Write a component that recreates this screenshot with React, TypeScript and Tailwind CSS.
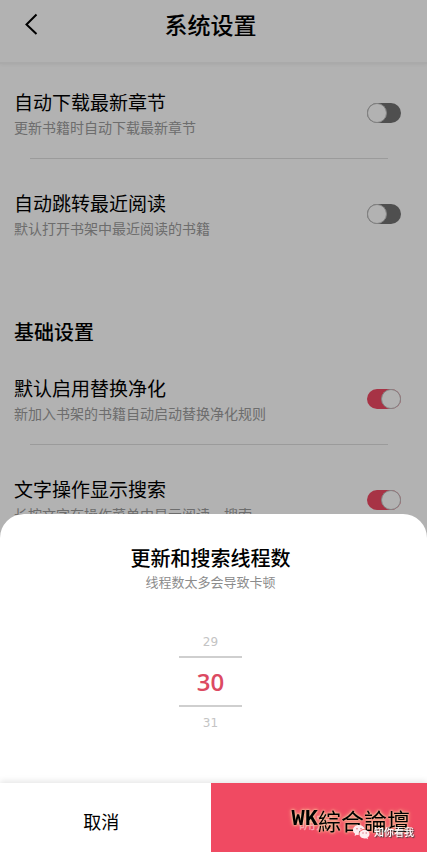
import { useState } from "react";
import type { ReactNode } from "react";

type SettingProps = {
  id: string;
  title: string;
  description: string;
  defaultChecked?: boolean;
};

const Setting = ({ id, title, description, defaultChecked = false }: SettingProps) => {
  return (
    <div className="flex items-start justify-between pl-[14px] pr-5">
      <label htmlFor={id} className="min-w-0">
        <span className="block text-[19px] leading-[26px] text-black">{title}</span>
        <span className="block pb-[2px] text-sm leading-6 text-[#9c9c9c]">{description}</span>
      </label>
      <input
        id={id}
        type="checkbox"
        role="switch"
        defaultChecked={defaultChecked}
        className="mt-[14px] flex h-5 w-[34px] shrink-0 appearance-none rounded-full bg-[#727272] before:size-5 before:rounded-full before:border before:border-[#bdbdbd] before:bg-white before:content-[''] checked:justify-end checked:bg-[#f04a64]"
      />
    </div>
  );
};

const Divider = () => <hr className="mt-[17px] mb-[31px] ml-[30px] mr-[33px] border-t border-[#dedede]" />;

const SettingsPage = () => {
  return (
    <div className="min-h-screen bg-white pr-[6px]">
      <header className="-mr-[6px] flex h-16 items-start border-b-2 border-[#f4f4f4] pr-[6px] shadow-[0_1px_3px_rgba(0,0,0,0.05)]">
        <button type="button" aria-label="返回" className="w-16 pl-5 pt-[13px]">
          <svg viewBox="0 0 24 24" className="size-6" fill="none" stroke="black" strokeWidth="2">
            <path d="M16.5 1.5 6.5 11.5l10 9.500" />
          </svg>
        </button>
        <h1 className="flex-1 pt-2 text-center text-[23px] leading-8 font-medium text-black">系统设置</h1>
        <span className="w-16" />
      </header>
      <main className="pt-[25px]">
        <Setting id="auto-download" title="自动下载最新章节" description="更新书籍时自动下载最新章节" />
        <Divider />
        <Setting id="auto-open" title="自动跳转最近阅读" description="默认打开书架中最近阅读的书籍" />
        <h2 className="mt-[76px] mb-[29px] pl-[14px] text-xl leading-7 font-medium text-black">基础设置</h2>
        <Setting id="replace" title="默认启用替换净化" description="新加入书架的书籍自动启动替换净化规则" defaultChecked />
        <Divider />
        <Setting id="search" title="文字操作显示搜索" description="长按文字在操作菜单中显示阅读、搜索" defaultChecked />
      </main>
    </div>
  );
};

const PickerLine = ({ children }: { children: ReactNode }) => (
  <div className="flex h-[51px] w-[63px] items-center justify-center border-y-2 border-[#cfcfcf]">{children}</div>
);

const ThreadSheet = () => {
  const [count, setCount] = useState(30);

  return (
    <section
      role="dialog"
      aria-labelledby="thread-title"
      className="fixed inset-x-0 bottom-0 rounded-t-[24px] bg-white pt-[30px]"
    >
      <div className="flex flex-col items-center pr-[6px]">
        <h2 id="thread-title" className="text-xl leading-7 font-medium text-black">
          更新和搜索线程数
        </h2>
        <p className="text-[13px] leading-5 text-[#8c8c8c]">线程数太多会导致卡顿</p>
        <div className="flex flex-col items-center pt-10 pb-[52px]">
          <button
            type="button"
            onClick={() => setCount(count - 1)}
            className="h-6 pb-1 font-['DejaVu_Sans',sans-serif] text-xs leading-4 text-[#c4c4c4]"
          >
            {count - 1}
          </button>
          <PickerLine>
            <output className="font-['Open_Sans',sans-serif] text-2xl font-semibold text-[#dc4a62]">{count}</output>
          </PickerLine>
          <button
            type="button"
            onClick={() => setCount(count + 1)}
            className="h-6 pt-2 font-['DejaVu_Sans',sans-serif] text-xs leading-4 text-[#c4c4c4]"
          >
            {count + 1}
          </button>
        </div>
      </div>
      <div className="flex h-[69px] shadow-[0_-2px_6px_rgba(0,0,0,0.1)]">
        <button type="button" className="flex-1 bg-white pt-[6px] text-lg text-black">
          <span className="pr-2">取消</span>
        </button>
        <button type="button" className="flex-1 bg-[#f04a62] pt-[6px] pr-[6px] text-lg text-white/50">
          确定
        </button>
      </div>
    </section>
  );
};

const Watermark = () => {
  return (
    <div className="pointer-events-none fixed right-[17px] bottom-3">
      <p className="flex items-center pb-1 text-[23px] leading-8 text-black [text-shadow:0_0_2px_#f8d0a8,0_0_3px_#f8c098,0_0_5px_#f8a888]">
        <span className="font-['Liberation_Mono',monospace] text-[22px] font-bold">WK</span>
        <span className="font-['Noto_Sans_CJK_TC',sans-serif]">綜合論壇</span>
      </p>
      <p className="absolute -right-1 bottom-0 flex items-center gap-1 text-[10px] leading-4 font-medium text-white [text-shadow:1px_1px_1px_#444]">
        <svg viewBox="0 0 18 16" className="h-4 w-[18px]" fill="#fdeef0">
          <path d="M7 1C3.500 1 1 3.200 1 6c0 1.600.8 2.900 2.100 3.800L2.600 12l2.200-1.200c.6.200 1.300.3 2 .3A5 5 0 0 1 6.700 10c0-2.900 2.600-4.900 6-4.900C12.100 2.700 9.800 1 7 1Z" />
          <path d="M17.500 10.200c0-2.300-2.200-4.200-5-4.200s-5 1.900-5 4.200 2.200 4.200 5 4.200c.6 0 1.100-.1 1.600-.2l1.900 1-.5-1.700c1.200-.8 2-2 2-3.300Z" />
          <g fill="#e0707f">
            <circle cx="5" cy="4.800" r=".8" />
            <circle cx="9" cy="4.800" r=".8" />
            <circle cx="11" cy="9" r=".7" />
            <circle cx="14.200" cy="9" r=".7" />
          </g>
        </svg>
        知你看我
      </p>
    </div>
  );
};

export default function App() {
  return (
    <div lang="zh-CN" className="font-['Noto_Sans_CJK_SC',sans-serif]">
      <SettingsPage />
      <div className="fixed inset-0 bg-black/30" />
      <ThreadSheet />
      <Watermark />
    </div>
  );
}
